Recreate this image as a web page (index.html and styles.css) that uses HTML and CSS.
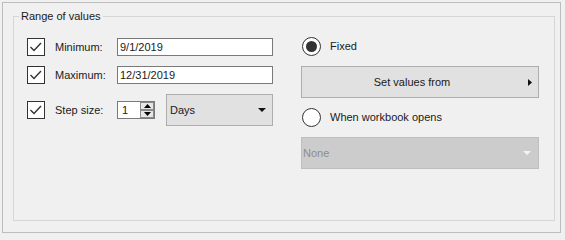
FILE: index.html
```html
<!DOCTYPE html>
<html>
<head>
<meta charset="utf-8">
<link rel="stylesheet" href="styles.css">
</head>
<body>
<div class="panel">
  <fieldset class="group">
    <legend class="legend">Range of values</legend>
    <div class="cols">
      <div class="left">
        <div class="row">
          <span class="cb"><svg class="check" width="16" height="16" viewBox="0 0 16 16"><polyline points="2.5,8 6,11.5 13,4" fill="none" stroke="#333" stroke-width="1.4"/></svg></span>
          <span class="lbl">Minimum:</span>
          <div class="field">9/1/2019</div>
        </div>
        <div class="row">
          <span class="cb"><svg class="check" width="16" height="16" viewBox="0 0 16 16"><polyline points="2.5,8 6,11.5 13,4" fill="none" stroke="#333" stroke-width="1.4"/></svg></span>
          <span class="lbl">Maximum:</span>
          <div class="field">12/31/2019</div>
        </div>
        <div class="row row-step">
          <span class="cb"><svg class="check" width="16" height="16" viewBox="0 0 16 16"><polyline points="2.5,8 6,11.5 13,4" fill="none" stroke="#333" stroke-width="1.4"/></svg></span>
          <span class="lbl">Step size:</span>
          <div class="spin">
            <span class="spin-val">1</span>
            <span class="spin-btns">
              <span class="spin-btn"><svg width="7" height="4" viewBox="0 0 7 4"><polygon points="0,4 3.5,0 7,4" fill="#000"/></svg></span>
              <span class="spin-btn"><svg width="7" height="4" viewBox="0 0 7 4"><polygon points="0,0 3.5,4 7,0" fill="#000"/></svg></span>
            </span>
          </div>
          <div class="combo">
            <span>Days</span>
            <svg width="8" height="4" viewBox="0 0 8 4"><polygon points="0,0 8,0 4,4" fill="#111"/></svg>
          </div>
        </div>
      </div>
      <div class="right">
        <div class="radio-row">
          <span class="radio on"></span>
          <span class="radio-lbl">Fixed</span>
        </div>
        <div class="btn">
          <span class="btn-text">Set values from</span>
          <svg width="4" height="7" viewBox="0 0 4 7"><polygon points="0,0 4,3.5 0,7" fill="#111"/></svg>
        </div>
        <div class="radio-row radio-row-2">
          <span class="radio"></span>
          <span class="radio-lbl">When workbook opens</span>
        </div>
        <div class="combo combo-disabled">
          <span>None</span>
          <svg width="8" height="4" viewBox="0 0 8 4"><polygon points="0,0 8,0 4,4" fill="#f4f4f4"/></svg>
        </div>
      </div>
    </div>
  </fieldset>
</div>
</body>
</html>
```
FILE: styles.css
```css
html, body {
  margin: 0;
  padding: 0;
  background: #f0f0f0;
}
body {
  font-family: "Liberation Sans", Arial, sans-serif;
  font-size: 11px;
  color: #1a1a1a;
}
.panel {
  margin: 2px;
  width: 559px;
  height: 231px;
  box-sizing: border-box;
  border: 1px solid #bdbdbd;
  padding: 7px 5px 11px 10px;
}
.group {
  margin: 0;
  padding: 0;
  min-width: 0;
  width: 542px;
  height: 211px;
  box-sizing: border-box;
  border: 1px solid #d6d6d6;
}
.legend {
  padding: 0 2px;
  margin-left: 5px;
  line-height: 13px;
}
.cols {
  display: flex;
  padding: 14px 0 0 13px;
}
.left {
  width: 246px;
  display: flex;
  flex-direction: column;
  gap: 10px;
  padding-top: 1px;
}
.row {
  display: flex;
  align-items: center;
  height: 18px;
}
.row-step {
  height: 32px;
}
.cb {
  width: 18px;
  height: 18px;
  box-sizing: border-box;
  border: 1px solid #333;
  background: #fff;
  display: flex;
  align-items: center;
  justify-content: center;
}
.lbl {
  margin-left: 10px;
  width: 62px;
}
.field {
  width: 156px;
  height: 18px;
  box-sizing: border-box;
  border: 1px solid #7a7a7a;
  background: #fff;
  padding-left: 2px;
  line-height: 16px;
}
.spin {
  display: flex;
  width: 38px;
  height: 18px;
  box-sizing: border-box;
  border: 1px solid #7a7a7a;
  background: #fff;
}
.spin-val {
  flex: 1;
  padding-left: 4px;
  line-height: 16px;
}
.spin-btns {
  width: 14px;
  display: flex;
  flex-direction: column;
}
.spin-btn {
  flex: 1;
  box-sizing: border-box;
  border: 1px solid #8a8a8a;
  background: #e6e6e6;
  display: flex;
  align-items: center;
  justify-content: center;
}
.combo {
  margin-left: 11px;
  width: 107px;
  height: 32px;
  box-sizing: border-box;
  border: 1px solid #adadad;
  background: #e1e1e1;
  display: flex;
  align-items: center;
  justify-content: space-between;
  padding: 0 6px 0 3px;
}
.right {
  margin-left: 28px;
  width: 238px;
  display: flex;
  flex-direction: column;
}
.radio-row {
  display: flex;
  align-items: center;
  height: 18px;
}
.radio-row-2 {
  margin-top: 10px;
}
.radio {
  width: 19px;
  height: 19px;
  margin-left: 1px;
  box-sizing: border-box;
  border: 1px solid #333;
  border-radius: 50%;
  background: #fff;
  display: flex;
  align-items: center;
  justify-content: center;
}
.radio.on::after {
  content: "";
  width: 11px;
  height: 11px;
  border-radius: 50%;
  background: #333;
}
.radio-lbl {
  margin-left: 9px;
}
.btn {
  margin-top: 11px;
  height: 32px;
  box-sizing: border-box;
  border: 1px solid #adadad;
  background: #e1e1e1;
  display: flex;
  align-items: center;
  padding-right: 6px;
}
.btn-text {
  flex: 1;
  text-align: center;
  padding-right: 6px;
}
.combo-disabled {
  margin-left: 0;
  margin-top: 11px;
  width: 238px;
  background: #cccccc;
  border-color: #bfbfbf;
  color: #8c8c8c;
  padding: 0 7px 0 1px;
}
```
